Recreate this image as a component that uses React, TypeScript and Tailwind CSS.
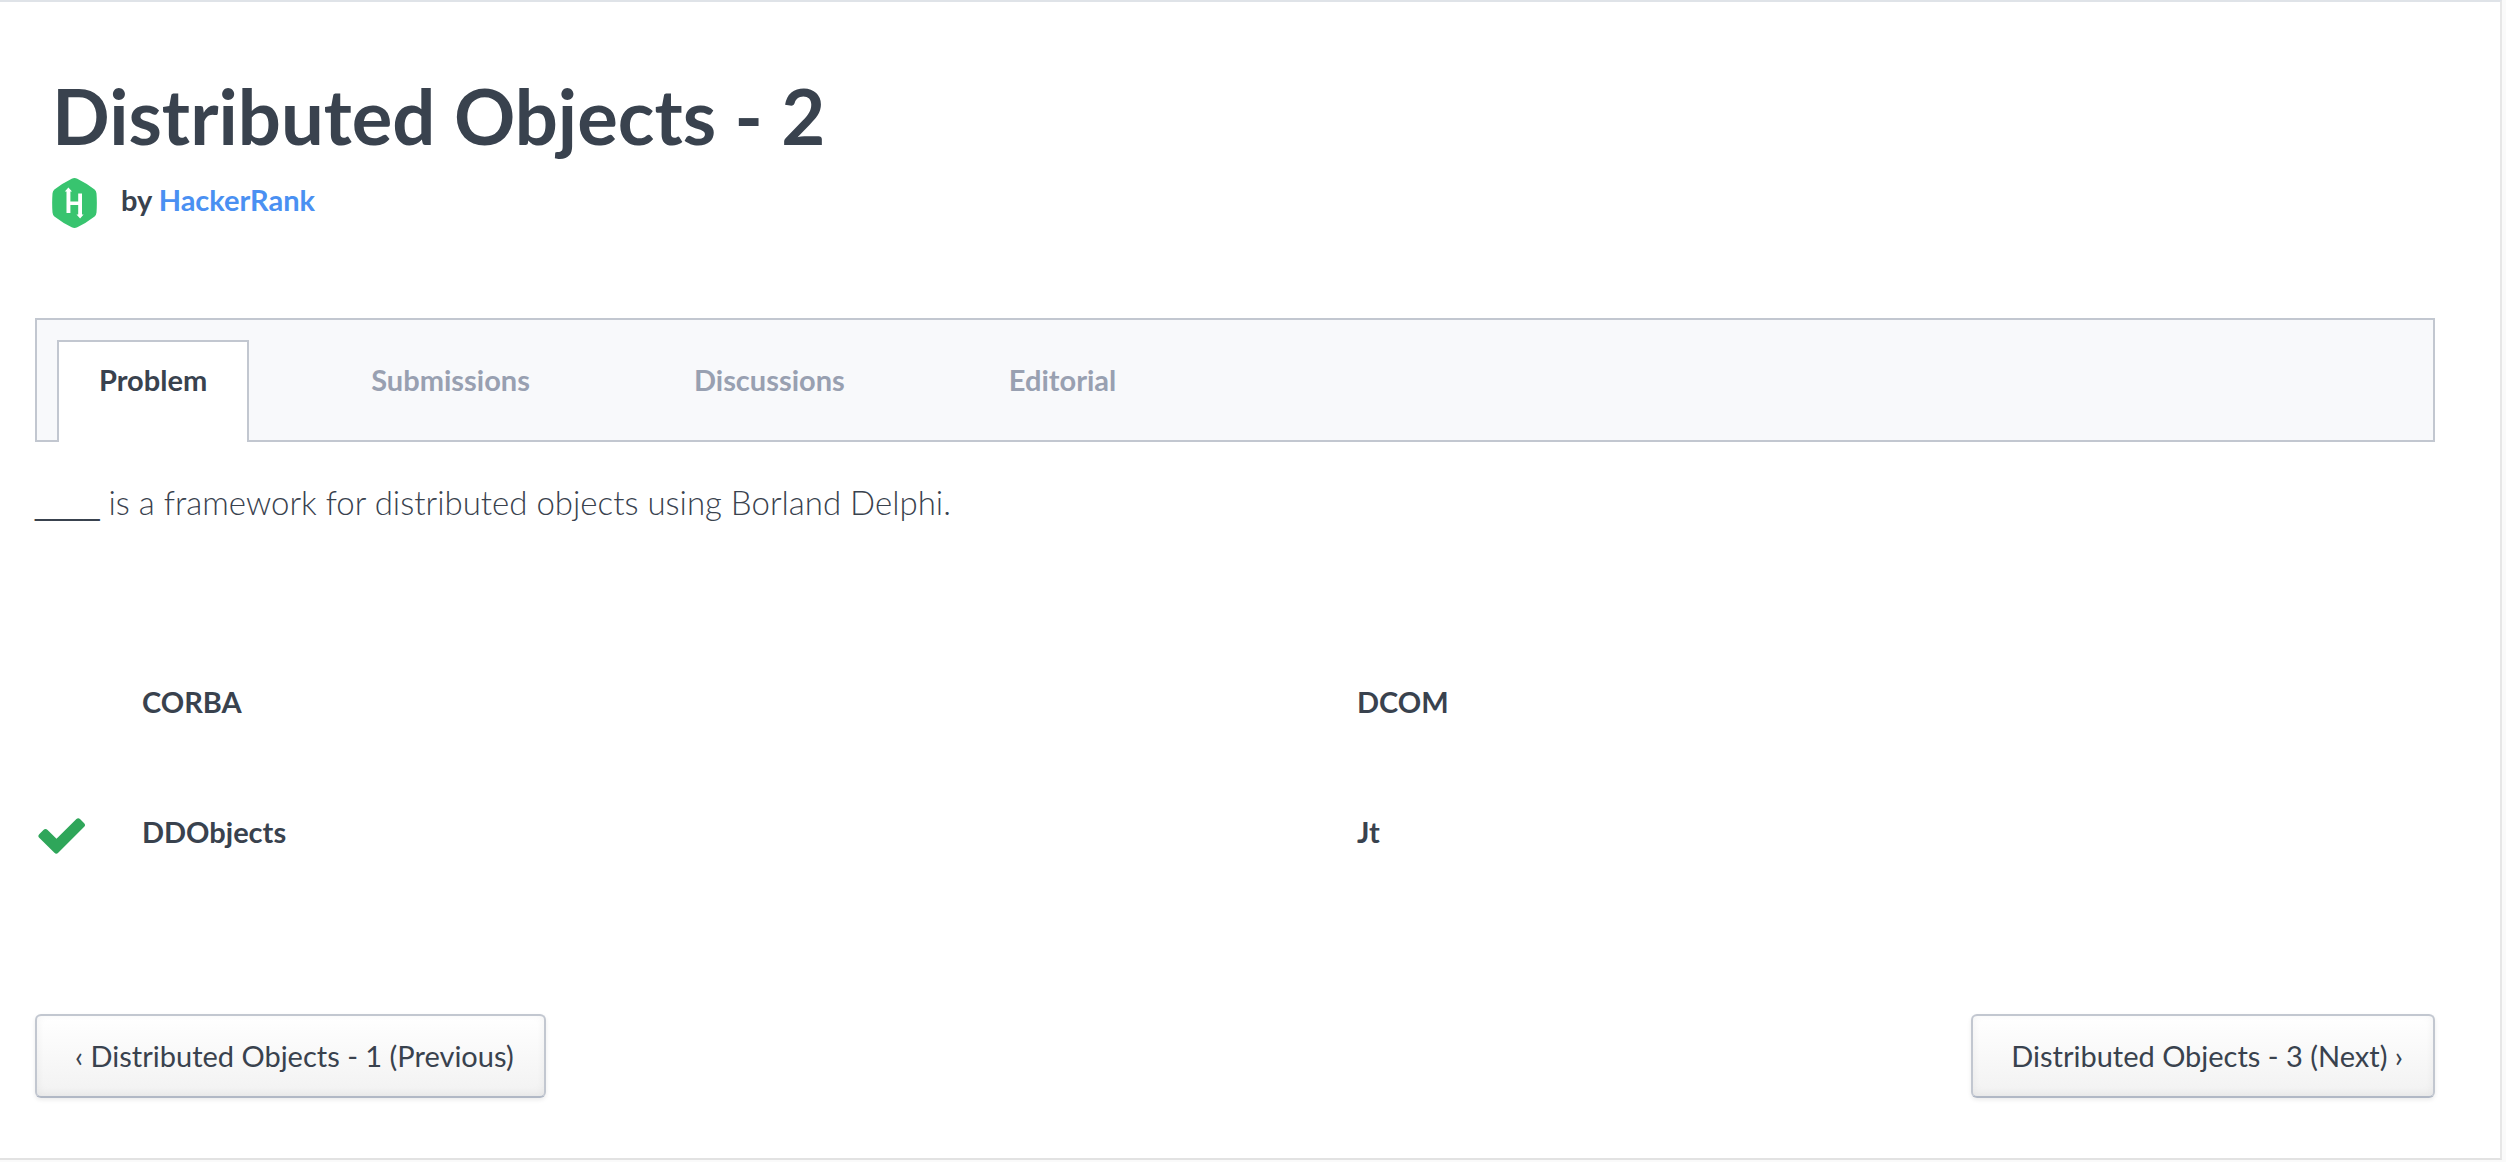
const tabs = ["Problem", "Submissions", "Discussions", "Editorial"];

const options = [
  { label: "CORBA", correct: false },
  { label: "DCOM", correct: false },
  { label: "DDObjects", correct: true },
  { label: "Jt", correct: false },
];

function HackerRankLogo() {
  return (
    <svg className="h-[50px] w-[45px] shrink-0" viewBox="0 0 45 50" role="img" aria-label="HackerRank logo">
      <path
        fill="#38c46f"
        d="M19.7 0.8Q22.5-0.6 25.3 0.8Q34 5 42.6 11.6Q44.3 13 44.5 15.4Q45.2 25 44.5 34.6Q44.3 37 42.6 38.4Q34 45 25.3 49.2Q22.5 50.6 19.7 49.2Q11 45 2.4 38.4Q0.7 37 0.5 34.6Q-0.2 25 0.5 15.4Q0.7 13 2.4 11.6Q11 5 19.7 0.8Z"
      />
      <path
        fill="#fff"
        d="M16.4 9.6L20 13.4H18.4V23.6H26.2V15.4H30V36.4H31.6L28.1 40.4L24.5 36.4H26.2V27H18.4V35H14.5V13.4H12.8Z"
      />
    </svg>
  );
}

function CheckMark() {
  return (
    <svg className="h-9 w-12" viewBox="0 0 48 36" role="img" aria-label="Correct answer">
      <path
        fill="#2fa65a"
        d="M1.2 16.2L5.4 12Q7.5 10 9.6 12L18.5 20.8L38.4 1Q40.2-0.7 42 1L46.2 5.2Q47.9 7 46.2 8.8L20.2 34.8Q18.3 36.6 16.4 34.8L1.2 19.8Q-0.5 18 1.2 16.2Z"
      />
    </svg>
  );
}

function PagerButton({ children }: { children: string }) {
  return (
    <button
      type="button"
      className="h-[84px] rounded-md border-2 border-[#c2c7d0] border-b-[#b1b8c5] bg-linear-to-b from-white to-[#f2f2f2] pr-[30px] pl-[38px] text-[29px] text-[#39424e] shadow-[0_2px_4px_rgba(0,0,0,0.08),inset_0_-2px_8px_rgba(0,0,0,0.06)]"
    >
      {children}
    </button>
  );
}

export default function App() {
  return (
    <div className="min-h-screen bg-[#fafafa] pr-1 font-['Lato',sans-serif] text-[#39424e]">
      <main className="min-h-[1160px] border-t-2 border-r-2 border-b-2 border-t-[#dfe3e8] border-r-[#e7e7e7] border-b-[#e2e2e2] bg-white pr-[65px] pl-[35px]">
        <header className="px-[17px] pt-[74px]">
          <h1 className="text-[76px] leading-[80px] font-bold">Distributed Objects - 2</h1>
          <div className="mt-[22px] flex items-start gap-6">
            <HackerRankLogo />
            <p className="pt-1.5 text-[29px] leading-8 font-bold">
              by{" "}
              <a href="#hackerrank" className="text-[#4a90f2]">
                HackerRank
              </a>
            </p>
          </div>
        </header>

        <div role="tablist" className="mt-[90px] flex gap-20 border-2 border-[#c2c7d0] bg-[#f8f9fb] pt-5 pl-5">
          {tabs.map((tab, i) => (
            <button
              key={tab}
              type="button"
              role="tab"
              aria-selected={i === 0}
              className={
                i === 0
                  ? "-mb-0.5 border-2 border-b-0 border-[#c2c7d0] bg-white px-10 pt-[22px] pb-[46px] text-[29px] leading-8 font-bold"
                  : "border-2 border-b-0 border-transparent px-10 pt-[22px] pb-11 text-[29px] leading-8 font-bold text-[#98a0b1]"
              }
            >
              {tab}
            </button>
          ))}
        </div>

        <p className="mt-9 text-[33px] leading-[48px] font-light">
          <span className="font-['Liberation_Sans',sans-serif] text-[29px] leading-none">____</span> is a framework for
          distributed objects using Borland Delphi.
        </p>

        <ul className="mt-[160px] grid grid-cols-2 gap-x-[30px] gap-y-[98px]">
          {options.map((option) => (
            <li key={option.label} className="flex h-8 items-center text-[29px] leading-8 font-bold">
              <span className="flex w-[107px] pt-2 pl-[3px]">{option.correct && <CheckMark />}</span>
              {option.label}
            </li>
          ))}
        </ul>

        <nav aria-label="Challenges" className="mt-[166px] flex justify-between pb-[60px]">
          <PagerButton>‹ Distributed Objects - 1 (Previous)</PagerButton>
          <PagerButton>Distributed Objects - 3 (Next) ›</PagerButton>
        </nav>
      </main>
    </div>
  );
}
